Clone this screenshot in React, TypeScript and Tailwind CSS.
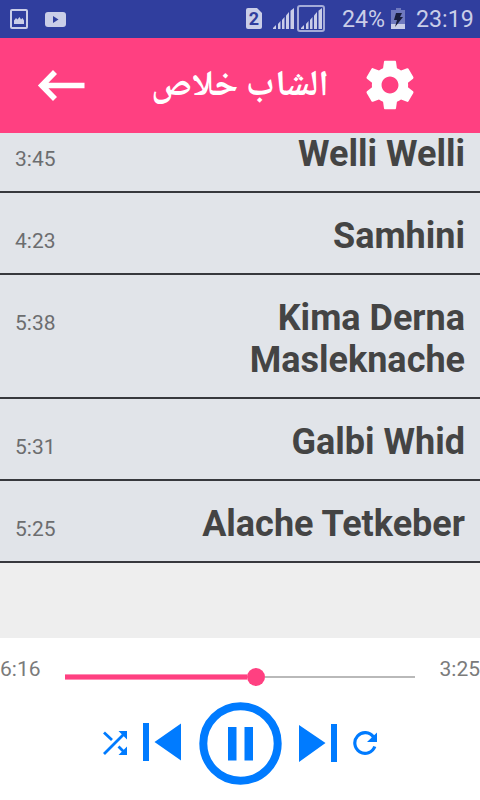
interface Track {
  title: string;
  duration: string;
}

const tracks: Track[] = [
  { title: "Welli Welli", duration: "3:45" },
  { title: "Samhini", duration: "4:23" },
  { title: "Kima Derna Masleknache", duration: "5:38" },
  { title: "Galbi Whid", duration: "5:31" },
  { title: "Alache Tetkeber", duration: "5:25" },
];

const SignalBars = () => (
  <g fill="currentColor">
    <path d="M0 21v-1l3-3v4z" />
    <path d="M5 21v-5l2.500-3v8z" />
    <path d="M9 21v-9l2.500-3v12z" />
    <path d="M13 21V7.500L16 4v17z" />
    <path d="M17.500 21V2.700L21 0v21z" />
  </g>
);

const StatusBar = () => {
  return (
    <div className="h-[38px] shrink-0 bg-[#303e9e] text-[#cacee8] flex items-center">
      <svg className="w-[18px] h-5 ml-[10px]" viewBox="0 0 18 20" fill="none">
        <rect x="1" y="1" width="16" height="18" rx="1" stroke="currentColor" strokeWidth="2" />
        <path d="M4 15v-3.500l2-2.500 1.500 1.500 2-2.500 1.500 2.500L12.500 9l1.500 2.500V15z" fill="currentColor" />
      </svg>
      <svg className="w-[21px] h-[15px] ml-[17px]" viewBox="0 0 21 15">
        <rect width="21" height="15" rx="3" fill="currentColor" />
        <path d="M8 4l5.500 3.500L8 11z" fill="#303e9e" />
      </svg>
      <svg className="w-4 h-[21px] ml-[180px] mb-px" viewBox="0 0 16 21">
        <path d="M2 0h9l5 5v14a2 2 0 0 1-2 2H2a2 2 0 0 1-2-2V2a2 2 0 0 1 2-2z" fill="currentColor" />
        <text x="8" y="17" textAnchor="middle" fill="#303e9e" className="font-['Roboto'] font-bold text-[18px]">
          2
        </text>
      </svg>
      <svg className="w-[21px] h-[21px] ml-[11px] mb-px" viewBox="0 0 21 21">
        <SignalBars />
      </svg>
      <svg className="w-7 h-[27px] ml-[3px] mb-px" viewBox="0 0 28 27">
        <rect x="1" y="1" width="26" height="25" rx="2" fill="none" stroke="#a4abd8" strokeWidth="2" />
        <g transform="translate(4 3)">
          <SignalBars />
        </g>
      </svg>
      <span className="w-[43px] ml-[17px] pt-[2px] text-[23.200px] leading-none whitespace-nowrap">24%</span>
      <svg className="w-[14px] h-[21px] ml-[6px] mb-px" viewBox="0 0 14 21">
        <path d="M5 0h5v2h4v14H0V2h5z" fill="#6f79be" />
        <path d="M0 16h14v5H0z" fill="currentColor" />
        <path d="M5 5h6L9 9h3l-8 10 2-7H3z" fill="#171c3c" />
      </svg>
      <span className="ml-[11px] pt-[2px] text-[23.200px] leading-none">23:19</span>
    </div>
  );
};

const Header = () => {
  return (
    <div className="h-[95px] shrink-0 bg-[#ff4081] text-white flex items-center">
      <button type="button" className="ml-[37px]">
        <svg className="w-12 h-8 block" viewBox="0 0 48 32" fill="none" stroke="currentColor" strokeWidth="5.600">
          <path d="M4 15.500h43.500M18 2L4.800 15.500 18 29" />
        </svg>
      </button>
      <h1
        dir="rtl"
        className="w-[178px] ml-[66px] pt-1 text-center whitespace-nowrap text-[36px] leading-none font-bold font-['Noto_Naskh_Arabic','Noto_Sans_Arabic','DejaVu_Sans',sans-serif]"
      >
        الشاب خلاص
      </h1>
      <button type="button" className="ml-8 mb-px">
        <svg className="w-[58px] h-[58px] block" viewBox="0 0 24 24" fill="currentColor">
          <path d="M19.430 12.980c.040-.320.070-.640.070-.980s-.030-.660-.070-.980l2.110-1.650c.190-.150.240-.420.120-.640l-2-3.460c-.120-.220-.390-.300-.610-.220l-2.490 1c-.520-.400-1.080-.730-1.690-.980l-.380-2.650C14.460 2.180 14.250 2 14 2h-4c-.250 0-.460.180-.490.420l-.380 2.650c-.610.250-1.170.590-1.690.980l-2.490-1c-.230-.090-.490 0-.610.220l-2 3.460c-.130.220-.070.490.120.640l2.110 1.650c-.040.320-.070.650-.070.980s.030.660.070.980l-2.110 1.650c-.190.150-.240.420-.120.640l2 3.460c.120.220.390.300.610.220l2.490-1c.520.400 1.080.730 1.690.980l.380 2.650c.030.240.240.420.490.420h4c.250 0 .460-.180.490-.420l.380-2.650c.610-.250 1.170-.590 1.690-.980l2.490 1c.230.090.490 0 .610-.220l2-3.460c.120-.220.070-.490-.120-.640l-2.110-1.650zM12 15.500c-1.930 0-3.500-1.570-3.500-3.500s1.570-3.500 3.500-3.500 3.500 1.570 3.500 3.500-1.570 3.500-3.500 3.500z" />
        </svg>
      </button>
    </div>
  );
};

const TrackRow = ({ title, duration }: Track) => {
  return (
    <li className="flex items-baseline justify-between bg-[#e1e4e9] border-b-2 border-[#37383d] px-[15px] pt-[22px] pb-4">
      <span className="text-[21px] leading-none text-[#6c6d6f]">{duration}</span>
      <span className="w-[270px] text-right text-4xl leading-[42px] font-bold text-[#444]">{title}</span>
    </li>
  );
};

const Player = () => {
  return (
    <div className="h-[162px] shrink-0 bg-white text-[#007bff]">
      <div className="h-16 flex justify-between text-[21px] leading-none text-[#7b7b7b]">
        <span className="w-[65px] pt-[21px]">6:16</span>
        <div className="w-[350px] h-[18px] mt-[30px] flex items-center">
          <div className="w-[182px] h-[6px] bg-[#ff4081] border-y border-[#ff8db4]" />
          <div className="w-[18px] h-[18px] rounded-full bg-[#ff4081]" />
          <div className="flex-1 h-[2px] bg-[#b9b9b9]" />
        </div>
        <span className="w-[65px] pt-[21px] text-right">3:25</span>
      </div>
      <div className="h-[83px] pl-[103px] flex items-center">
        <svg className="w-6 h-6 mb-px" viewBox="0 0 24 24" fill="none" stroke="currentColor" strokeWidth="2.800">
          <path d="M1 1.500l8 7.500M1 23L21 3M15.500 15.500l5 5" />
          <path d="M15.500 0H24v8.500zM24 15.500V24h-8.500z" fill="currentColor" stroke="none" />
        </svg>
        <svg className="w-[38px] h-[38px] ml-4 mb-[3px]" viewBox="0 0 38 38" fill="currentColor">
          <path d="M0 0h6v38H0zM38 .500v37L11.500 19z" />
        </svg>
        <svg className="w-[83px] h-[83px] ml-[18px]" viewBox="0 0 83 83" fill="none">
          <circle cx="41.500" cy="41.500" r="37.200" stroke="currentColor" strokeWidth="8" />
          <path d="M29 25h8.500v33.500H29zM45.500 25H54v33.500h-8.500z" fill="currentColor" />
        </svg>
        <svg className="w-[38px] h-[38px] ml-[17px] mb-px" viewBox="0 0 38 38" fill="currentColor">
          <path d="M32 0h6v38h-6zM0 1v37L26.500 19z" />
        </svg>
        <svg className="w-6 h-6 ml-4 mb-px" viewBox="0 0 24 24" fill="none" stroke="currentColor" strokeWidth="3.200">
          <path d="M20.500 6A10.300 10.300 0 1 0 21.800 15.500" />
          <path d="M24 1.500v9.500h-10z" fill="currentColor" stroke="none" />
        </svg>
      </div>
    </div>
  );
};

const App = () => {
  return (
    <div className="w-[480px] h-[800px] flex flex-col overflow-hidden bg-[#eee] font-['Roboto',sans-serif]">
      <StatusBar />
      <Header />
      {/* list is scrolled, so the first row sits partly under the header */}
      <div className="flex-1 overflow-hidden">
        <ul className="-mt-[22px]">
          {tracks.map((track) => (
            <TrackRow key={track.title} {...track} />
          ))}
        </ul>
      </div>
      <Player />
    </div>
  );
};

export default App;
